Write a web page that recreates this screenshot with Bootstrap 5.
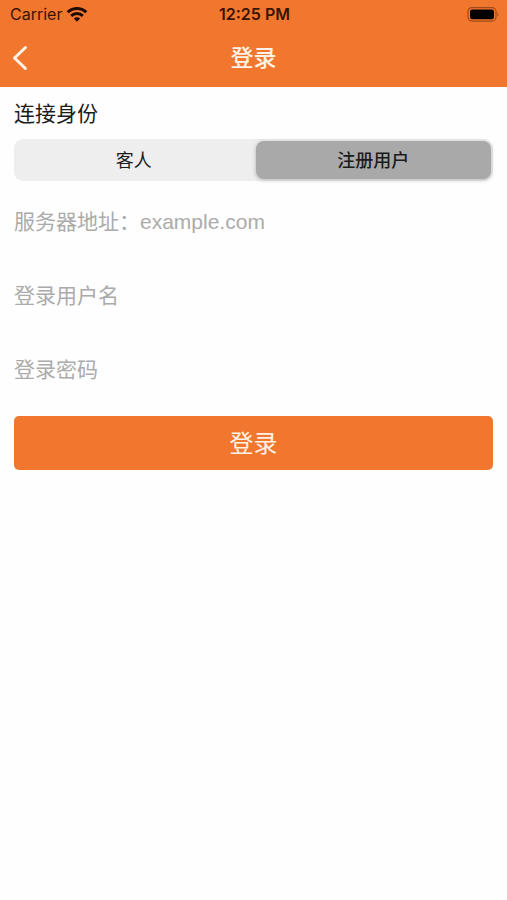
<!DOCTYPE html>
<html lang="zh-CN">
<head>
<meta charset="utf-8">
<meta name="viewport" content="width=device-width, initial-scale=1">
<title>登录</title>
<link href="https://cdn.jsdelivr.net/npm/bootstrap@5.3.0/dist/css/bootstrap.min.css" rel="stylesheet">
<style>
  :root { --brand: #f2772e; --ink: #1c1c1c; --hint: #ababab; }
  body { font-family: Inter, "Noto Sans CJK SC", sans-serif; color: var(--ink); background: #fefefe; }
  .app-header { background: var(--brand); }
  .status-bar { height: 29px; padding: 0 8px 0 10px; font-size: 16px; line-height: 29px; color: #3a1403; }
  .status-time { font-weight: 600; }
  .title-bar { height: 58px; padding: 0 12px; }
  .title-bar h1 { font-size: 23px; line-height: 58px; font-weight: 500; color: #fff3e8; }
  .back-btn { line-height: 0; }
  .login-form { padding: 13px 14px; }
  .field-title { font-size: 21px; line-height: 28px; margin-bottom: 11px; }
  .segments { height: 42px; padding: 2px; gap: 4px; border-radius: 9px; background: #eee; }
  .segments .segment { font-size: 18px; line-height: 40px; height: 38px; border-radius: 8px; color: var(--ink); cursor: pointer; }
  .segments .btn-check:checked + .segment { background: #a9a9a9; font-weight: 500; box-shadow: 0 1px 4px rgba(0, 0, 0, .25); }
  .fields { padding: 21px 0 26px; gap: 34px; }
  .line-input { height: 40px; font-family: "Liberation Sans", "Noto Sans CJK SC", sans-serif; font-size: 21px; line-height: 40px; color: var(--ink); background: transparent; }
  .line-input.form-control:focus { box-shadow: none; background: transparent; }
  .line-input::placeholder { color: var(--hint); opacity: 1; }
  .login-btn, .login-btn:hover { height: 54px; font-size: 24px; line-height: 56px; color: #fff3e8; background: var(--brand); border-radius: 5px; }
</style>
</head>
<body>
<header class="app-header">
  <div class="status-bar row g-0">
    <div class="col d-flex align-items-center gap-1">
      <span>Carrier</span>
      <svg width="22" height="16" viewBox="0 0 22 16" fill="none" stroke="#210b02" stroke-width="3" aria-hidden="true">
        <path d="M1.700 5.300a13.200 13.200 0 0 1 18.600 0M5.200 8.900a8.200 8.200 0 0 1 11.600 0"/>
        <path d="M11 14.700l-3.200-3.200a4.500 4.500 0 0 1 6.400 0z" fill="#210b02" stroke="none"/>
      </svg>
    </div>
    <div class="col-auto status-time">12:25 PM</div>
    <div class="col d-flex align-items-center justify-content-end">
      <svg width="33" height="16" viewBox="0 0 33 16" aria-hidden="true">
        <rect x="2" y="0.600" width="28" height="13.500" rx="4" fill="none" stroke="#a04b1a" stroke-width="1.200"/>
        <rect x="4" y="2.500" width="24" height="9.700" rx="2.300" fill="#050100"/>
        <path d="M31.400 5q1.800 2.400 0 4.700z" fill="#a04b1a"/>
      </svg>
    </div>
  </div>
  <nav class="title-bar row g-0 align-items-center">
    <div class="col">
      <button type="button" class="back-btn btn p-0 border-0" aria-label="返回">
        <svg width="16" height="26" viewBox="0 0 16 26" fill="none" stroke="#fff3e8" stroke-width="3" stroke-linecap="round" stroke-linejoin="round"><path d="M13.500 2.500L2.500 13l11 10.500"/></svg>
      </button>
    </div>
    <h1 class="col-auto m-0">登录</h1>
    <div class="col"></div>
  </nav>
</header>
<main>
  <form class="login-form">
    <fieldset>
      <legend class="field-title">连接身份</legend>
      <div class="segments d-flex">
        <input type="radio" class="btn-check" name="role" id="guest">
        <label class="segment w-50 text-center" for="guest">客人</label>
        <input type="radio" class="btn-check" name="role" id="member" checked>
        <label class="segment w-50 text-center" for="member">注册用户</label>
      </div>
    </fieldset>
    <div class="fields d-flex flex-column">
      <input type="text" class="line-input form-control border-0 rounded-0 p-0" placeholder="服务器地址：example.com" aria-label="服务器地址">
      <input type="text" class="line-input form-control border-0 rounded-0 p-0" placeholder="登录用户名" aria-label="登录用户名">
      <input type="password" class="line-input form-control border-0 rounded-0 p-0" placeholder="登录密码" aria-label="登录密码">
    </div>
    <button type="submit" class="login-btn btn w-100 border-0 p-0">登录</button>
  </form>
</main>
<script src="https://cdn.jsdelivr.net/npm/bootstrap@5.3.0/dist/js/bootstrap.bundle.min.js"></script>
</body>
</html>
